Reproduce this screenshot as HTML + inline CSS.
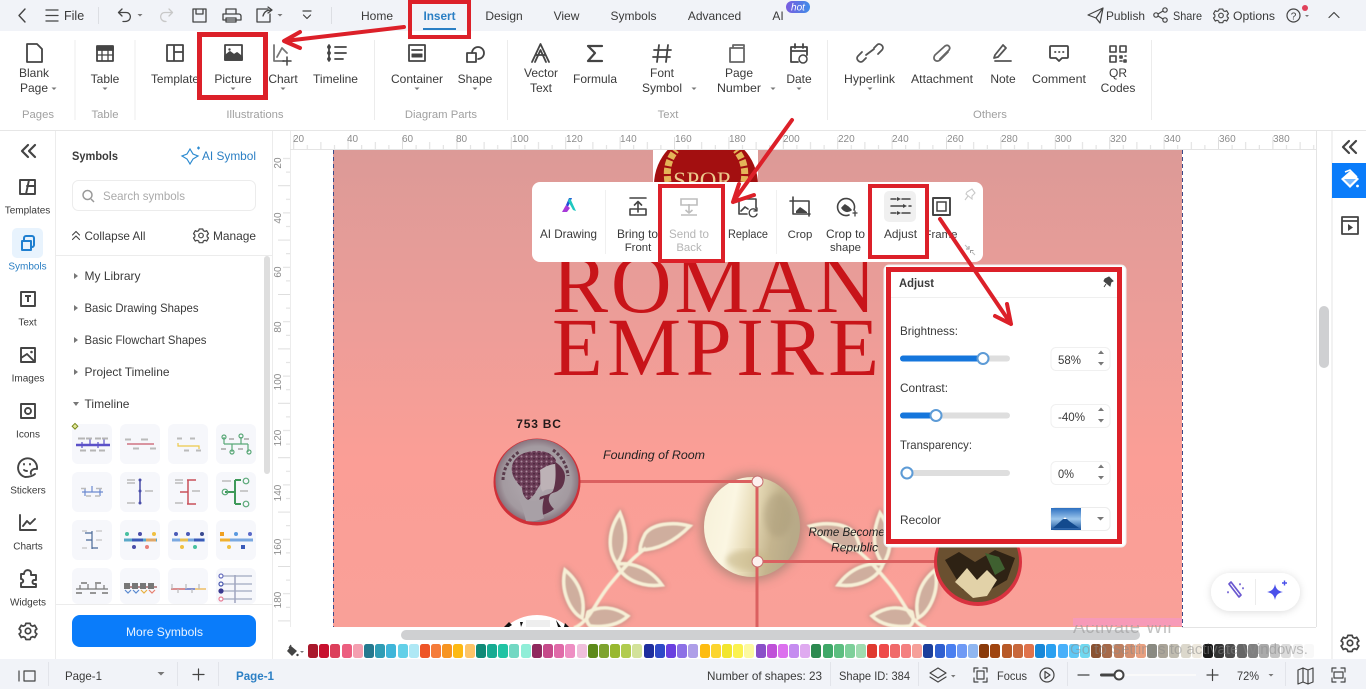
<!DOCTYPE html>
<html><head><meta charset="utf-8"><title>Roman Empire</title>
<style>
html,body{margin:0;padding:0;background:#fff;width:1366px;height:689px;overflow:hidden}
svg{position:absolute;left:0;top:0;display:block}
text{font-family:"Liberation Sans",sans-serif;font-size:12px;fill:#3a3a3a;letter-spacing:0}
.m{text-anchor:middle}
.g{fill:#a0a0a0;font-size:11.3px}
.r{font-size:10px;fill:#8c8c8c}
.l{font-size:10px;fill:#3a3a3a;text-anchor:middle}
.s{font-size:11.4px}
.k{fill:none;stroke:#444;stroke-linejoin:round;stroke-linecap:round}
.k2{fill:none;stroke:#444;stroke-linejoin:round;stroke-linecap:round}
.tr{fill:#777}
.red{fill:none;stroke:#dc2029}
.ar{fill:none;stroke:#dc2029;stroke-width:4;stroke-linecap:round;stroke-linejoin:round}
.pal{position:absolute;left:308px;top:644px;display:flex}
.pal i{display:block;width:10px;height:14px;margin-right:1.2px;border-radius:2.5px}
</style></head><body>
<svg width="1366" height="689" viewBox="0 0 1366 689" xmlns="http://www.w3.org/2000/svg" stroke-width="1.6">
<defs>
<linearGradient id="pg" x1="0" y1="0" x2="0" y2="1"><stop offset="0" stop-color="#dc9a97"/><stop offset=".35" stop-color="#ec9d98"/><stop offset=".65" stop-color="#fb9e96"/><stop offset="1" stop-color="#f9a098"/></linearGradient>
<linearGradient id="moon" x1="0" y1="0" x2="1" y2=".2"><stop offset="0" stop-color="#f6f0d8"/><stop offset=".35" stop-color="#fbf6e2"/><stop offset=".55" stop-color="#e8dcb8"/><stop offset=".8" stop-color="#c4b48e"/><stop offset="1" stop-color="#b8aa88"/></linearGradient>
<radialGradient id="coin" cx=".5" cy=".5" r=".55"><stop offset="0" stop-color="#b4acb2"/><stop offset=".75" stop-color="#a39aa0"/><stop offset="1" stop-color="#7a5f6c"/></radialGradient>
<linearGradient id="hot" x1="0" y1="0" x2="1" y2="0"><stop offset="0" stop-color="#7a5ce0"/><stop offset="1" stop-color="#3f8ce8"/></linearGradient>
<linearGradient id="sky" x1="0" y1="0" x2="0" y2="1"><stop offset="0" stop-color="#2c6fc0"/><stop offset=".5" stop-color="#9cc6ec"/><stop offset="1" stop-color="#1a559e"/></linearGradient>
<pattern id="curl" width="5" height="5" patternUnits="userSpaceOnUse"><rect width="5" height="5" fill="#6a3c56"/><circle cx="1.500" cy="1.500" r="1" fill="#a88a9a"/><circle cx="4" cy="3.800" r=".8" fill="#3f2034"/></pattern>
<clipPath id="pc"><rect x="333" y="150" width="849" height="477"/></clipPath>
<clipPath id="wm"><rect x="1060" y="625" width="112" height="10"/></clipPath>
<filter id="bl" x="-20%" y="-20%" width="140%" height="140%"><feGaussianBlur stdDeviation="5"/></filter>
<filter id="b1" x="-10%" y="-10%" width="120%" height="120%"><feGaussianBlur stdDeviation=".6"/></filter>
<filter id="b3" x="-10%" y="-10%" width="120%" height="120%"><feGaussianBlur stdDeviation="3"/></filter>
<filter id="sh" x="-20%" y="-30%" width="140%" height="160%"><feDropShadow dx="0" dy="1" stdDeviation="4" flood-color="#000" flood-opacity=".14"/></filter>
<pattern id="rt" x="21.2" y="131" width="54.4" height="18" patternUnits="userSpaceOnUse"><path d="M.5 6v12M14.100 14v4M27.700 11v7M41.300 14v4" stroke="#dedede" stroke-width="1" fill="none"/></pattern>
<pattern id="rl" x="272" y="22" width="18" height="54.4" patternUnits="userSpaceOnUse"><path d="M6 .5h12M14 14.100h4M11 27.700h7M14 41.300h4" stroke="#dedede" stroke-width="1" fill="none"/></pattern>
<g id="gear"><path d="M-2.500-9h5l.8 2.400 2.300 1 2.300-1.100 2.500 4.300-1.900 1.600v2.600l1.900 1.600-2.500 4.300-2.300-1.100-2.300 1-.8 2.400h-5l-.8-2.400-2.300-1-2.300 1.100-2.500-4.300 1.900-1.600v-2.600l-1.900-1.600 2.500-4.300 2.300 1.100 2.300-1z"/><circle r="3.200"/></g>
<g id="leaf">
<path d="M620 513C627 530 629 548 617 564C607 550 608 530 620 513Z"/>
<path d="M690 526C672 521 652 524 645 534C641 542 640 546 640 550C660 550 676 540 690 526Z"/>
<path d="M662 585C650 568 632 562 617 564C622 578 640 588 662 585Z"/>
<path d="M565 570C580 582 586 600 582 618C570 612 560 590 565 570Z"/>
<path d="M628 616C614 606 600 606 588 612C586 618 586 622 590 626C606 628 620 624 628 616Z"/>
</g>
<g id="stem"><path d="M574 628C590 622 596 600 612 582C622 570 632 558 646 548"/></g>
</defs>

<!-- base -->
<rect width="1366" height="689" fill="#fff"/>
<rect width="1366" height="31" fill="#f1f3f8"/>
<path d="M0 130.500H1366" stroke="#e6e6e6" stroke-width="1"/>

<!-- top bar -->
<path class="k" stroke-width="1.400" d="M25 9l-6 6.500 6 6.500"/>
<path class="k" stroke-width="1.300" d="M46 10h12M46 15.500h12M46 21h12"/>
<text x="64" y="20" style="font-size:12.500px">File</text>
<path d="M98.500 7v17M331.500 7v17" stroke="#dcdee3" stroke-width="1"/>
<path class="k" stroke-width="1.300" d="M122 9l-3.500 3.500 3.500 3.500M119 12.500h7c6 0 6 9-1 9h-2"/>
<path class="tr" d="M137.500 14h5l-2.500 2.500z"/>
<path class="k" style="stroke:#c8c8c8" stroke-width="1.300" d="M169 9l3.500 3.500-3.500 3.500M172 12.500h-7c-6 0-6 9 1 9h-2"/>
<g class="k" stroke-width="1.300"><path d="M193 9h13v13h-13zM196 9v5h7V9"/><path d="M223 14h16c1 0 2 1 2 2v4h-18v-4c0-1 0-2 0-2zM226 14V9h10v5M226 18h10v4h-10z"/></g>
<g class="k" stroke-width="1.300"><path d="M268 9h-11v13h13v-8M263 16c1-4 4-6 8-6M268 7l4 3-4 3"/></g>
<path class="tr" d="M277.500 14h5l-2.500 2.500z"/>
<path class="k" stroke-width="1.200" d="M303 11h8M303.500 15l3.500 3.500 3.500-3.500"/>
<text x="377" y="20" class="m">Home</text>
<text x="439.500" y="20" class="m" style="fill:#2b7fc4;font-weight:700;font-size:11.800px">Insert</text>
<rect x="423" y="28" width="33" height="2" fill="#2b7fc4"/>
<text x="504" y="20" class="m">Design</text>
<text x="566.500" y="20" class="m">View</text>
<text x="633.500" y="20" class="m">Symbols</text>
<text x="714.500" y="20" class="m">Advanced</text>
<text x="778" y="20" class="m">AI</text>
<rect x="786" y="1" width="24" height="12" rx="6" fill="url(#hot)"/>
<text x="798" y="10.500" class="m" style="font-size:10px;fill:#fff;font-style:italic">hot</text>
<path class="k" stroke-width="1.200" d="M1088 15l15-7-3 15-4-5zM1096 18l7-10"/>
<text x="1106" y="20" textLength="39" lengthAdjust="spacingAndGlyphs">Publish</text>
<g class="k" stroke-width="1.200"><circle cx="1156" cy="15" r="2.200"/><circle cx="1165" cy="10" r="2.200"/><circle cx="1165" cy="20" r="2.200"/><path d="M1158 14l5-3M1158 16l5 3"/></g>
<text x="1173" y="20" textLength="29" lengthAdjust="spacingAndGlyphs">Share</text>
<g class="k" stroke-width="1.600"><use href="#gear" transform="translate(1221 15.500) scale(.72)"/></g>
<text x="1233" y="20" textLength="42" lengthAdjust="spacingAndGlyphs">Options</text>
<circle cx="1293.500" cy="15.500" r="6.500" class="k" stroke-width="1.200"/>
<text x="1293.500" y="19.500" class="m" style="font-size:10px">?</text>
<circle cx="1305" cy="8" r="3" fill="#e0405a"/>
<path class="tr" d="M1305 15h4l-2 2z"/>
<path class="k" stroke-width="1.200" d="M1329 17.500l5-5 5 5"/>

<!-- ribbon separators -->
<path d="M75 40v80M135 40v80M374.500 40v80M507.500 40v80M827.500 40v80M1151.500 40v80" stroke="#ececec" stroke-width="1"/>
<!-- ribbon icons -->
<g class="k2" stroke-width="1.800">
<path d="M27 44h10l5 5v13H27z"/>
<path d="M97 46h16v15H97z"/><path d="M97 47h16v3H97z" fill="#444"/><path d="M97 55h16M102 50v11M108 50v11" stroke-width="1.300"/>
<path d="M167 45h16v16h-16zM174 45v16M174 52h9"/>
<path d="M225 45h17v15h-17z"/><path d="M225 60v-4l5-4 4 3 3-2 5 4v3z" fill="#444"/><circle cx="229.500" cy="49.500" r="1.200" fill="#444" stroke="none"/>
<path d="M274 45v16h10M277 57l5-9 5 5" stroke="#777"/><path d="M287 57v8M283 61h8" stroke-width="1.500"/>
<path d="M329 45v16M335 47h11M335 53h11M335 59h8"/><circle cx="329" cy="47" r="1"/><circle cx="329" cy="53" r="1"/><circle cx="329" cy="59" r="1"/>
<path d="M409 45h16v16h-16zM412 50h10"/><path d="M412 54h10v3h-10z" fill="#444" stroke-width="1"/>
<path d="M467 53h9v9h-9z"/><path d="M472 53a6 6 0 1 1 6 6"/>
<path d="M532 62l8.500-18 8.500 18M536 55h9M535 62l5.500-12 5.500 12"/>
<path d="M602 46h-14l7 7-7 8h14" stroke-width="2.200"/>
<path d="M659 45l-2 17M668 45l-2 17M654 50h17M653 57h17"/>
<path d="M733 48v-3h11v2M730 48h14v14h-14z" stroke="#666"/>
<path d="M791 47h16v8M791 47v15h7M791 51h16M795 44v4M803 44v4"/><circle cx="803" cy="59" r="4" stroke-width="1.500"/>
<path d="M866 58l-3 3c-3 3-8-2-5-5l4-4M874 48l3-3c3-3 8 2 5 5l-4 4M866 55l8-6" stroke="#555"/>
<path d="M948 52l-8 8c-4 3-8-1-5-5l10-9c3-2 6 1 4 4l-9 9" stroke="#666"/>
<path d="M995 55l8-10 3 3-8 9-4 1zM995 61h16" stroke="#555"/>
<path d="M1051 46h16c1 0 1 1 1 1v10c0 1-1 1-1 1h-5l-3 3-3-3h-5s-1 0-1-1V47s0-1 1-1z"/><path d="M1055 52h.5M1059 52h.5M1063 52h.5"/>
<path d="M1110 46h6v6h-6zM1120 46h6v6h-6zM1110 56h6v6h-6z" stroke-width="1.600"/><path d="M1120 56h2v2h-2zM1124 60h2v2h-2zM1120 61h2M1125 56h1" stroke-width="1.600"/>
</g>
<!-- ribbon labels -->
<text x="34" y="77" class="m">Blank</text><text x="34" y="92" class="m">Page</text><path class="tr" d="M51.500 87.500h5l-2.500 2.500z"/>
<text x="105" y="83" class="m">Table</text><path class="tr" d="M102.500 87.500h5l-2.500 2.500z"/>
<text x="151" y="83" textLength="48" lengthAdjust="spacingAndGlyphs">Template</text>
<text x="233" y="83" class="m">Picture</text><path class="tr" d="M230.500 87.500h5l-2.500 2.500z"/>
<text x="283" y="83" class="m">Chart</text><path class="tr" d="M280.500 87.500h5l-2.500 2.500z"/>
<text x="313" y="83" textLength="45" lengthAdjust="spacingAndGlyphs">Timeline</text>
<text x="391" y="83" textLength="52" lengthAdjust="spacingAndGlyphs">Container</text><path class="tr" d="M414.500 87.500h5l-2.500 2.500z"/>
<text x="475" y="83" class="m">Shape</text><path class="tr" d="M472.500 87.500h5l-2.500 2.500z"/>
<text x="541" y="77" class="m">Vector</text><text x="541" y="92" class="m">Text</text>
<text x="573" y="83" textLength="44" lengthAdjust="spacingAndGlyphs">Formula</text>
<text x="662" y="77" class="m">Font</text><text x="642" y="92" textLength="40" lengthAdjust="spacingAndGlyphs">Symbol</text><path class="tr" d="M691.500 87.500h5l-2.500 2.500z"/>
<text x="739" y="77" class="m">Page</text><text x="717" y="92" textLength="44" lengthAdjust="spacingAndGlyphs">Number</text><path class="tr" d="M770.500 87.500h5l-2.500 2.500z"/>
<text x="799" y="83" class="m">Date</text><path class="tr" d="M796.500 87.500h5l-2.500 2.500z"/>
<text x="844" y="83" textLength="51" lengthAdjust="spacingAndGlyphs">Hyperlink</text><path class="tr" d="M867.500 87.500h5l-2.500 2.500z"/>
<text x="911" y="83" textLength="62" lengthAdjust="spacingAndGlyphs">Attachment</text>
<text x="1003" y="83" class="m">Note</text>
<text x="1032" y="83" textLength="54" lengthAdjust="spacingAndGlyphs">Comment</text>
<text x="1118" y="77" class="m">QR</text><text x="1118" y="92" class="m">Codes</text>
<text x="38" y="118" class="m g">Pages</text><text x="105" y="118" class="m g">Table</text><text x="255" y="118" class="m g">Illustrations</text><text x="441" y="118" class="m g">Diagram Parts</text><text x="668" y="118" class="m g">Text</text><text x="990" y="118" class="m g">Others</text>

<!-- left rail -->
<path d="M55.500 131V659M272.500 131V659M290.500 131V627" stroke="#ececec" stroke-width="1"/>
<path class="k2" stroke-width="2.200" d="M28 145l-6 6 6 6M35 145l-6 6 6 6"/>
<g class="k2" stroke-width="1.900">
<path d="M20 180h15v14H20zM26 194l3-14M27 186h8"/>
<path d="M21 292h14v14H21z"/>
<path d="M21 348h14v14H21zM21 358l6-4 8 8"/>
<path d="M21 404h14v14H21z"/><circle cx="28" cy="411" r="3"/>
<path d="M35 474c-3 3-8 3-10 3a9.500 9.500 0 1 1 12-8c-4-1-7 2-6 5M24 464v.5M30 464v.5M24 470c1 1 2 1 3 1"/>
<path d="M20 515v15h16M23 526l4-5 3 3 5-5"/>
<path d="M24 574c0-5 7-5 7-1v2h5v5h-2c-2 0-2 4 0 4h2v3H21v-4c3 0 3-4 0-4v-5z"/>
</g>
<rect x="12" y="228" width="31" height="30" rx="5" fill="#e8f3fd"/>
<path d="M22 241h9v9h-9z M24 241v-3c0-1 1-2 2-2h6c1 0 2 1 2 2v7c0 1-1 2-2 2h-1" fill="none" stroke="#1f7fd0" stroke-width="2" stroke-linejoin="round"/>
<path d="M25 296h6M28 296v6" stroke="#444" stroke-width="2"/><circle cx="31.500" cy="352" r="1.300" fill="#444"/>
<text x="27.500" y="213.500" class="l">Templates</text>
<text x="27.500" y="269.500" class="l" style="fill:#2b7fc4">Symbols</text>
<text x="27.500" y="325.500" class="l">Text</text>
<text x="28" y="381.500" class="l">Images</text>
<text x="28" y="437.500" class="l">Icons</text>
<text x="28" y="493.500" class="l">Stickers</text>
<text x="28" y="549.500" class="l">Charts</text>
<text x="28" y="605.500" class="l">Widgets</text>
<g class="k2" stroke-width="2"><use href="#gear" transform="translate(28 631) scale(.85)"/></g>

<!-- symbols panel -->
<text x="72" y="160" textLength="46" lengthAdjust="spacingAndGlyphs" style="font-weight:700">Symbols</text>
<path d="M190 149l3 5 5 2-5 3-3 5-3-5-5-3 5-2z M197 148h3M198.500 146.500v3" fill="none" stroke="#2b8ad0" stroke-width="1.200"/>
<text x="202" y="160" textLength="54" lengthAdjust="spacingAndGlyphs" style="fill:#2b7fc4">AI Symbol</text>
<rect x="72.500" y="180.500" width="183" height="30" rx="6" fill="#fff" stroke="#ececec" stroke-width="1"/>
<circle cx="87.500" cy="195" r="4.500" fill="none" stroke="#999" stroke-width="1.500"/><path d="M91 199l3 3" stroke="#999" stroke-width="1.500"/>
<text x="103" y="200" textLength="82" lengthAdjust="spacingAndGlyphs" style="fill:#aaa">Search symbols</text>
<path class="k" stroke-width="1.100" d="M72.500 235l3.500-3.500 3.500 3.500M72.500 239.500l3.500-3.500 3.500 3.500"/>
<text x="84.500" y="240" textLength="61" lengthAdjust="spacingAndGlyphs">Collapse All</text>
<g class="k" stroke-width="1.700"><use href="#gear" transform="translate(201 235.500) scale(.72)"/></g>
<text x="213" y="240" textLength="43" lengthAdjust="spacingAndGlyphs">Manage</text>
<path d="M56 255.500H272M56 604.500H272" stroke="#ececec" stroke-width="1"/>
<rect x="264" y="256" width="6" height="218" rx="3" fill="#dedede"/>
<path class="tr" d="M74 273l4 3-4 3zM74 305l4 3-4 3zM74 337l4 3-4 3zM74 369l4 3-4 3z"/>
<path class="tr" d="M73 402h6l-3 4z"/>
<text x="84.500" y="280" textLength="56" lengthAdjust="spacingAndGlyphs">My Library</text>
<text x="84.500" y="312" textLength="114" lengthAdjust="spacingAndGlyphs">Basic Drawing Shapes</text>
<text x="84.500" y="344" textLength="122" lengthAdjust="spacingAndGlyphs">Basic Flowchart Shapes</text>
<text x="84.500" y="376" textLength="85" lengthAdjust="spacingAndGlyphs">Project Timeline</text>
<text x="84.500" y="408" textLength="45" lengthAdjust="spacingAndGlyphs">Timeline</text>
<g fill="#f6f7fb">
<rect x="72" y="424" width="40" height="40" rx="6"/><rect x="120" y="424" width="40" height="40" rx="6"/><rect x="168" y="424" width="40" height="40" rx="6"/><rect x="216" y="424" width="40" height="40" rx="6"/>
<rect x="72" y="472" width="40" height="40" rx="6"/><rect x="120" y="472" width="40" height="40" rx="6"/><rect x="168" y="472" width="40" height="40" rx="6"/><rect x="216" y="472" width="40" height="40" rx="6"/>
<rect x="72" y="520" width="40" height="40" rx="6"/><rect x="120" y="520" width="40" height="40" rx="6"/><rect x="168" y="520" width="40" height="40" rx="6"/><rect x="216" y="520" width="40" height="40" rx="6"/>
<rect x="72" y="568" width="40" height="36" rx="6"/><rect x="120" y="568" width="40" height="36" rx="6"/><rect x="168" y="568" width="40" height="36" rx="6"/><rect x="216" y="568" width="40" height="36" rx="6"/>
</g>
<rect x="72.500" y="424.500" width="4" height="4" transform="rotate(45 75 427)" fill="#e4e89a" stroke="#7a8a20" stroke-width="1"/>
<!-- thumbs -->
<g fill="none" stroke-width="1.200">
<path d="M76 445h34" stroke="#5a50c8" stroke-width="2.500"/><path d="M82 442v6M90 438v7M98 442v6M104 438v7" stroke="#5a50c8"/><path d="M78 438.500h7M86 438.500h6M95 438.500h6M102 438.500h6M80 450.500h6M90 450.500h6M99 450.500h6" stroke="#b5b5b5" stroke-width="2"/>
<path d="M127 444h27" stroke="#c85a6a"/><path d="M125 439.500h6M141 439.500h7M133 448.500h6M150 448.500h6" stroke="#bbb" stroke-width="2"/>
<path d="M178 443v3h21v3" stroke="#ecc94a"/><path d="M177 438.500h5M190 438.500h5M184 450.500h5M196 450.500h5" stroke="#bbb" stroke-width="2"/>
<path d="M224 444h24M224 437v7M241 437v7M232 444v8M248 444v8" stroke="#5aa878"/><path d="M229 439h5M244 439h5M221 449h5M238 449h5" stroke="#bbb" stroke-width="2"/><g stroke="#5aa878"><circle cx="224" cy="437" r="2"/><circle cx="241" cy="436" r="2"/><circle cx="232" cy="452" r="2"/><circle cx="249" cy="452" r="2"/></g>
<path d="M82 492h21M85 488v8M92 486v6M100 488v8" stroke="#6c8ad0"/><path d="M81 488.500h5M96 488.500h6M86 496h5M95 496h5" stroke="#bbb" stroke-width="1.600"/>
<path d="M140 480v22" stroke="#4a4ea8" stroke-width="1.500"/><circle cx="140" cy="480" r="1.500" fill="#4a4ea8"/><circle cx="140" cy="491" r="1.500" fill="#4a4ea8"/><circle cx="140" cy="503" r="1.500" fill="#4a4ea8"/><path d="M127 480h8M127 483h8M145 491h8M127 503h8" stroke="#bbb" stroke-width="1.600"/>
<path d="M187 480h9M188 480v24M180 492h8M187 504h9" stroke="#c8505a" stroke-width="1.500"/><path d="M175 480h8M175 483h8M192 491h8M175 503h8" stroke="#bbb" stroke-width="1.600"/>
<path d="M235 480v24M235 480h6M225 492h10M235 504h6" stroke="#3f9a5a" stroke-width="2"/><g stroke="#5aa878"><circle cx="246" cy="481" r="2.800"/><circle cx="225" cy="492" r="2.800"/><circle cx="246" cy="504" r="2.800"/></g><path d="M222 481h9M240 491h8" stroke="#bbb" stroke-width="1.600"/>
<path d="M92 531v18M85 533h7M86 540h6M92 548h6" stroke="#4a6a98"/><path d="M82 531h5M96 531h6M96 540h6M82 548h5" stroke="#ccc" stroke-width="1.600"/>
<path d="M124 540h33" stroke="#5aa8c8" stroke-width="3"/><path d="M132 540h11" stroke="#3a5ab8" stroke-width="3"/><path d="M146 540h10" stroke="#e0a868" stroke-width="3"/><g fill="#4a4ea8" stroke="none"><circle cx="140" cy="534" r="2"/><circle cx="134" cy="547" r="2"/></g><circle cx="127" cy="534" r="2" fill="#48c0a0" stroke="none"/><circle cx="154" cy="534" r="2" fill="#f0c040" stroke="none"/><circle cx="147" cy="547" r="2" fill="#e88078" stroke="none"/>
<path d="M172 540h33" stroke="#7aa8e0" stroke-width="3"/><path d="M180 540h8" stroke="#e8c050" stroke-width="3"/><path d="M194 540h10" stroke="#3a5ab8" stroke-width="3"/><g stroke="none"><circle cx="176" cy="534" r="2" fill="#4a5ab8"/><circle cx="188" cy="534" r="2" fill="#4a5ab8"/><circle cx="202" cy="534" r="2" fill="#3a4a90"/><circle cx="182" cy="547" r="2" fill="#f0c040"/><circle cx="195" cy="547" r="2" fill="#48c0a0"/></g>
<path d="M220 540h33" stroke="#7aa8e0" stroke-width="3"/><path d="M220 540h10" stroke="#f0b030" stroke-width="3"/><g stroke="none"><rect x="220" y="532" width="4" height="4" fill="#f0a020"/><circle cx="236" cy="534" r="2" fill="#5a9ae0"/><circle cx="250" cy="534" r="2" fill="#5a6ac8"/><circle cx="229" cy="547" r="2" fill="#f0c040"/><rect x="241" y="545" width="4" height="4" fill="#3a5ab8"/></g>
<path d="M76 589h32M80 585v4M88 584v5M96 584v5M104 585v4" stroke="#777"/><path d="M81 583h6M95 583h6M76 593h6M90 593h6M102 593h6" stroke="#888" stroke-width="1.800"/>
<path d="M124 587h33" stroke="#a86a6a" stroke-width="1.500"/><rect x="124" y="583" width="6" height="6" fill="#777" stroke="none"/><rect x="132" y="583" width="6" height="6" fill="#777" stroke="none"/><rect x="140" y="583" width="6" height="6" fill="#777" stroke="none"/><rect x="148" y="583" width="6" height="6" fill="#777" stroke="none"/><path d="M125 590l3 3 3-3M133 590l3 3 3-3" stroke="#5a8ad0"/><path d="M141 590l3 3 3-3" stroke="#e8b040"/><path d="M149 590l3 3 3-3" stroke="#e88070"/>
<path d="M171 589h14" stroke="#c84a4a"/><path d="M185 589h10" stroke="#3a4ab0"/><path d="M195 589h11" stroke="#ecb040"/><path d="M172 584v5M186 584v5M199 584v5M178 589v4M192 589v4" stroke="#bbb"/>
<path d="M235 575v28" stroke="#8a90b0"/><path d="M222 576h30M222 584h30M222 591h30M222 599h30" stroke="#a0a8c0"/><g fill="#fff"><circle cx="221" cy="576" r="2" stroke="#6a70c0"/><circle cx="221" cy="584" r="2" stroke="#4a5ab0"/><circle cx="221" cy="591" r="2" stroke="#3a3a90" fill="#3a3a90"/><circle cx="221" cy="599" r="2" stroke="#e88098"/></g>
</g>
<rect x="72" y="615" width="184" height="32" rx="8" fill="#0a7cfa"/>
<text x="126" y="636" textLength="77" lengthAdjust="spacingAndGlyphs" style="fill:#eaf4ff">More Symbols</text>

<!-- rulers -->
<rect x="290" y="131" width="1026" height="18" fill="url(#rt)"/>
<rect x="272" y="150" width="18" height="477" fill="url(#rl)"/>
<path d="M290 149.500H1316" stroke="#e4e4e4" stroke-width="1"/>
<path d="M1316.500 131V627M1332 131V659" stroke="#e4e4e4" stroke-width="1"/>
<g>
<text x="293" y="142" class="r">20</text><text x="347" y="142" class="r">40</text><text x="402" y="142" class="r">60</text><text x="456" y="142" class="r">80</text><text x="512" y="142" class="r">100</text><text x="566" y="142" class="r">120</text><text x="620" y="142" class="r">140</text><text x="675" y="142" class="r">160</text><text x="729" y="142" class="r">180</text><text x="783" y="142" class="r">200</text><text x="838" y="142" class="r">220</text><text x="892" y="142" class="r">240</text><text x="947" y="142" class="r">260</text><text x="1001" y="142" class="r">280</text><text x="1055" y="142" class="r">300</text><text x="1110" y="142" class="r">320</text><text x="1164" y="142" class="r">340</text><text x="1219" y="142" class="r">360</text><text x="1273" y="142" class="r">380</text>
</g>
<g>
<text transform="translate(281 163) rotate(-90)" class="r m">20</text><text transform="translate(281 218) rotate(-90)" class="r m">40</text><text transform="translate(281 272) rotate(-90)" class="r m">60</text><text transform="translate(281 327) rotate(-90)" class="r m">80</text><text transform="translate(281 382) rotate(-90)" class="r m">100</text><text transform="translate(281 438) rotate(-90)" class="r m">120</text><text transform="translate(281 493) rotate(-90)" class="r m">140</text><text transform="translate(281 547) rotate(-90)" class="r m">160</text><text transform="translate(281 600) rotate(-90)" class="r m">180</text>
</g>

<!-- canvas page -->
<rect x="333" y="150" width="849" height="477" fill="url(#pg)"/>
<g clip-path="url(#pc)">
<rect x="653" y="150" width="105" height="40" fill="#fff"/>
<circle cx="706" cy="185" r="52" fill="#a30f10"/>
<path d="M668 182c-2-12 0-22 8-32M744 182c2-12 0-22-8-32" fill="none" stroke="#e4b458" stroke-width="7" stroke-dasharray="6 2"/>
<text x="703" y="188" class="m" style="font-family:'Liberation Serif',serif;font-size:23px;fill:#ecc98c;letter-spacing:.5px">SPQR</text>

<text x="552" y="312" textLength="324" lengthAdjust="spacing" style="font-family:'Liberation Serif',serif;font-size:84px;fill:#c81419">ROMAN</text>
<text x="552" y="375" textLength="327" lengthAdjust="spacing" style="font-family:'Liberation Serif',serif;font-size:83px;fill:#c81419">EMPIRE</text>

<!-- moon -->
<ellipse cx="752" cy="527" rx="52" ry="54" fill="#8f7a6a" opacity=".6" filter="url(#bl)"/>
<ellipse cx="752" cy="527" rx="48" ry="50" fill="url(#moon)"/>
<ellipse cx="778" cy="515" rx="14" ry="22" fill="#a89a78" opacity=".45" filter="url(#b3)"/>
<ellipse cx="748" cy="560" rx="22" ry="10" fill="#c8b88a" opacity=".6" filter="url(#b3)"/>
<!-- leaves -->
<g opacity=".5" filter="url(#b3)" fill="none" stroke="#8a7268" stroke-width="5">
<use href="#leaf"/><g transform="translate(1500 0) scale(-1 1)"><use href="#leaf"/></g>
</g>
<g filter="url(#b1)">
<use href="#leaf" fill="#cfae9e" stroke="#f6efd6" stroke-width="3.500"/>
<use href="#stem" fill="none" stroke="#f6efd6" stroke-width="3.500"/>
<g transform="translate(1500 0) scale(-1 1)"><use href="#leaf" fill="#cfae9e" stroke="#f6efd6" stroke-width="3.500"/><use href="#stem" fill="none" stroke="#f6efd6" stroke-width="3.500"/></g>
</g>
<!-- connector lines -->
<path d="M580 481.500H757V627M757 561.500H937" fill="none" stroke="#db6060" stroke-width="3"/>
<circle cx="757.500" cy="481.500" r="5.500" fill="#fdf0ee" stroke="#c87070" stroke-width="1"/>
<circle cx="757.500" cy="561.500" r="5.500" fill="#fdf0ee" stroke="#c87070" stroke-width="1"/>
<!-- coin -->
<circle cx="537" cy="482" r="43.500" fill="#cf3038"/>
<circle cx="537" cy="480.500" r="41.500" fill="url(#coin)"/>
<path d="M512 472c-2-12 8-20 22-21 10-1 18 2 22 9 0 6-6 8-12 10-2 6-2 14-6 18-3 6-6 10-10 12-4-2-6-8-6-12-4-4-9-10-10-16z" fill="url(#curl)"/>
<path d="M540 470c5-3 10-6 16-6 3 4 6 10 5 16-1 5-4 8-8 9-5 0-8 0-10 3-4-4-2-14-3-22z" fill="#bdb2b6"/>
<path d="M555 462c4 2 10 8 10 14s-2 12-6 14c-3 3-7 2-9 5-3 5 0 10 4 14-4 3-8 5-12 6-2-6-4-12-2-18 4-2 10-2 13-6 3-8 3-18 2-29z" fill="#5f3148"/>
<path d="M518 498c8 4 18 4 26 0-2 8-2 14 0 20-6 3-12 4-18 3-2-8-4-16-8-23z" fill="#a8a0a6"/>
<path d="M503 480a34 34 0 0 1 16-28M553 450a35 35 0 0 1 15 26" fill="none" stroke="#5a3c4c" stroke-width="3" stroke-dasharray="3 2"/>
<!-- second circle -->
<circle cx="978" cy="562" r="44" fill="#d93240"/>
<circle cx="978" cy="561" r="41" fill="#6a5030"/>
<path d="M945 560l14-8 16 10 20-12 20 8-8 22-24 14-20-4z" fill="#2e2214"/>
<path d="M955 582l12-14 10 12 10-10 10 10-10 16-14 2z" fill="#e2d2a8"/>
<path d="M985 553l14 4 6 12-10 6z" fill="#3f6030"/>
<!-- third circle -->
<circle cx="537" cy="661" r="46" fill="#fff"/>
<path d="M504 627l5-5 3 3-3 2zM520 622h3l-2 5zM556 620l5 7h-3zM565 623l4 4h-5z" fill="#111"/>
<path d="M526 620h24v7h-24z" fill="#eee"/>
<text x="539" y="428" class="m" style="font-weight:700;font-size:12px;letter-spacing:.8px;fill:#241a1a">753 BC</text>
<text x="603" y="459" textLength="102" lengthAdjust="spacingAndGlyphs" style="font-style:italic;fill:#222">Founding of Room</text>
<text x="808.500" y="536" textLength="82" lengthAdjust="spacingAndGlyphs" style="font-style:italic;fill:#222">Rome Becomes</text>
<text x="831" y="551.500" textLength="47" lengthAdjust="spacingAndGlyphs" style="font-style:italic;fill:#222">Republic</text>
<rect x="1073" y="618" width="109" height="8" fill="#f79ab8"/>
</g>
<path d="M333.500 150V627M1182.500 150V627" stroke="#3a4a8a" stroke-width="1" stroke-dasharray="4 3" fill="none"/>
<path d="M1182 627.500H1316" stroke="#e4e4e4" stroke-width="1"/>

<!-- horizontal + vertical scrollbars -->
<rect x="401" y="630" width="739" height="10" rx="5" fill="#cfd0d2"/>
<rect x="1319" y="306" width="10" height="62" rx="5" fill="#cfd0d2"/>

<!-- float ai pill -->
<rect x="1211" y="573" width="89" height="38" rx="19" fill="#fff" filter="url(#sh)"/>
<path d="M1255.500 579v26" stroke="#ececec" stroke-width="1"/>
<path d="M1229 584l10 13 2-2-10-13zM1240 584v.5M1228 592v.5M1243 588v.5" fill="none" stroke="#6a58d0" stroke-width="1.700" stroke-linecap="round" stroke-linejoin="round"/>
<path d="M1275 584c1 5 3 7 8 8-5 1-7 3-8 8-1-5-3-7-8-8 5-1 7-3 8-8z" fill="#4a50ea"/>
<path d="M1282 583h5M1284.500 580.500v5" stroke="#4a50ea" stroke-width="1.400"/>

<!-- right rail -->
<path class="k2" stroke-width="2.200" d="M1349 141l-6 6 6 6M1356 141l-6 6 6 6"/>
<rect x="1332" y="163" width="34" height="35" fill="#0a7cfa"/>
<path d="M1350 171l9 8-9 9-9-9z" fill="#fff"/><path d="M1345 172l5-2 7 7" fill="none" stroke="#fff" stroke-width="1.500"/><path d="M1344 179h12l-6 6z" fill="#0a7cfa" opacity=".55"/><circle cx="1357.500" cy="186" r="1.400" fill="#fff"/>
<path class="k2" stroke-width="1.800" d="M1342 217h16v17h-16zM1342 221h16"/><path d="M1348 224l5 3.500-5 3.500z" fill="#444"/>
<g class="k2" stroke-width="2"><use href="#gear" transform="translate(1350 643) scale(.85)"/></g>

<!-- paint bucket -->
<path d="M291 646l6 5-5 5-5-5z" fill="#444"/><path d="M289 648l2-3" stroke="#444" stroke-width="1.200"/><circle cx="297.500" cy="655" r="1.200" fill="#444"/>
<path class="tr" d="M300 651h4l-2 2z"/>

<!-- status bar -->
<rect y="659" width="1366" height="30" fill="#f1f3f8"/>
<path d="M48.500 662v24M177.500 662v24M218.500 662v24M830.500 662v24M918.500 662v24M1067.500 662v24M1285.500 662v24" stroke="#e2e4ea" stroke-width="1"/>
<path class="k" stroke-width="1.200" d="M19 671v10M24 671h11v10H24z"/>
<text x="65" y="680" textLength="37" lengthAdjust="spacingAndGlyphs">Page-1</text>
<path class="tr" d="M157.500 672h7l-3.500 3.500z"/>
<path class="k" stroke-width="1.200" d="M198.500 669v11M193 674.500h11"/>
<text x="236" y="680" textLength="38" lengthAdjust="spacingAndGlyphs" style="fill:#2b7fc4;font-weight:700">Page-1</text>
<text x="707" y="680" textLength="115" lengthAdjust="spacingAndGlyphs">Number of shapes: 23</text>
<text x="839" y="680" textLength="71" lengthAdjust="spacingAndGlyphs">Shape ID: 384</text>
<path class="k" stroke-width="1.200" d="M938 668l8 5-8 5-8-5zM930 677l8 5 8-5"/>
<path class="tr" d="M951 675h4.500l-2.250 2.500z"/>
<path class="k" stroke-width="1.200" d="M974 672v-4h4M983 668h4v4M987 678v4h-4M978 682h-4v-4M977 671h7v8h-7z"/>
<text x="997" y="680" textLength="30" lengthAdjust="spacingAndGlyphs">Focus</text>
<circle cx="1047" cy="675" r="7" class="k" stroke-width="1.200"/><path class="k" stroke-width="1.200" d="M1045 671.500l5 3.500-5 3.500z"/>
<path class="k" stroke-width="1.200" d="M1078 675h11M1207 675h11M1212.500 669.500v11"/>
<rect x="1100" y="674" width="96" height="2" fill="#fafafa"/>
<rect x="1100" y="673.500" width="18" height="3" fill="#444" rx="1.500"/>
<circle cx="1119" cy="675" r="4.500" fill="#fff" stroke="#444" stroke-width="2"/>
<text x="1237" y="680" textLength="22" lengthAdjust="spacingAndGlyphs">72%</text>
<path class="tr" d="M1268.500 674h5l-2.500 2.500z"/>
<path class="k" stroke-width="1.200" d="M1298 670l5-2 5 2 5-2v14l-5 2-5-2-5 2zM1303 668v14M1308 670v14"/>
<path class="k" stroke-width="1.200" d="M1332 672v-4h4M1341 668h4v4M1345 678v4h-4M1336 682h-4v-4M1334 672h9v6h-9z"/>

<!-- floating toolbar -->
<rect x="532" y="182" width="451" height="80" rx="8" fill="#fff"/>
<path d="M605.500 190v64M776.500 190v64" stroke="#f0f0f0" stroke-width="1"/>
<path d="M566 205l3-7 3 0-4 9z" fill="#1f4fd8"/><path d="M570 198l6 13-3-1-5-9z" fill="#1fc8c0"/><path d="M562 212l4-7 4 3-3 4z" fill="#a83ad8"/>
<text x="540" y="238" textLength="57" lengthAdjust="spacingAndGlyphs">AI Drawing</text>
<g class="k2" stroke-width="1.600"><path d="M630 198h16M638 212v-10M634.500 205l3.500-3.500 3.500 3.500M630 209h16v6h-16z"/></g>
<text x="617" y="238" textLength="41" lengthAdjust="spacingAndGlyphs">Bring to</text><text x="638" y="251" class="m s">Front</text>
<g fill="none" stroke="#bdbdbd" stroke-width="1.600"><path d="M681 199h16v6h-16zM689 204v9M685.500 210l3.500 3 3.500-3M681 215h16"/></g>
<text x="669" y="238" textLength="40" lengthAdjust="spacingAndGlyphs" style="fill:#b5b5b5">Send to</text><text x="689" y="251" class="m s" style="fill:#b5b5b5">Back</text>
<g class="k2" stroke-width="1.600"><path d="M739 199h17v9M739 199v15h8"/><path d="M741 211l4-4 3 2"/><path d="M757 214a4 4 0 1 1-1-4M757 208v3h-3" stroke-width="1.300"/></g>
<text x="728" y="238" textLength="40" lengthAdjust="spacingAndGlyphs">Replace</text>
<g class="k2" stroke-width="1.600"><path d="M793 197v17h17M790 201h19v15"/></g><path d="M796 211l4-4 3 2 4 3v1h-11z" fill="#444"/>
<text x="800" y="238" class="m s">Crop</text>
<g class="k2" stroke-width="1.600"><path d="M854 210a8.500 8.500 0 1 0-5 5"/><path d="M842 208l3-3 3 2 3 3c-3 2-6 2-9-2z" fill="#444"/><path d="M853 213h4M855 211v5" stroke-width="1.300"/></g>
<text x="826" y="238" textLength="39" lengthAdjust="spacingAndGlyphs">Crop to</text><text x="845.500" y="251" class="m s">shape</text>
<rect x="884" y="191" width="32" height="31" rx="5" fill="#f0f0f0"/>
<g class="k2" stroke-width="1.500"><path d="M891 199h5M902 199h8M891 206h12M909 206h2M891 213h5M902 213h8"/></g><path d="M897 197l4 2-4 2zM903 204l4 2-4 2zM897 211l4 2-4 2z" fill="#444"/>
<text x="884" y="238" textLength="33" lengthAdjust="spacingAndGlyphs">Adjust</text>
<path class="k2" stroke-width="1.900" d="M933 198h17v17h-17z"/><path d="M937 202h9v9h-9z" fill="none" stroke="#444" stroke-width="1.500"/>
<text x="941" y="238" class="m s">Frame</text>
<path d="M967 192l5-3 3 4-3 3 0 3-6-5zM968 196l-3 4" fill="none" stroke="#c8c8c8" stroke-width="1.100"/>
<path d="M969 246v3h-3M970.500 253v-2.500h3" fill="none" stroke="#999" stroke-width="1"/><path d="M965 245l3 3M975 255l-3-3" stroke="#bbb" stroke-width="1"/>

<!-- adjust panel -->
<rect x="884" y="265" width="242" height="282" rx="5" fill="#fff" stroke="#eee" stroke-width="1"/>
<text x="899" y="287" textLength="35" lengthAdjust="spacingAndGlyphs" style="font-weight:700">Adjust</text>
<path d="M1105 279l4-2 4 4-2 1-1 4-6-5zM1106 284l-2 3" fill="#444" stroke="#444" stroke-width="1"/>
<path d="M890 297.500H1118" stroke="#efefef" stroke-width="1"/>
<text x="900" y="335" textLength="58" lengthAdjust="spacingAndGlyphs">Brightness:</text>
<rect x="900" y="355.500" width="110" height="6" rx="3" fill="#dedede"/><rect x="900" y="355.500" width="83" height="6" rx="3" fill="#1576dc"/><circle cx="983" cy="358.500" r="5.500" fill="#fff" stroke="#5d9bd6" stroke-width="2"/>
<rect x="1051" y="347.500" width="59" height="23" rx="5" fill="#fff" stroke="#f0f0f0" stroke-width="1"/><text x="1058" y="364" textLength="23" lengthAdjust="spacingAndGlyphs">58%</text>
<text x="900" y="392" textLength="48" lengthAdjust="spacingAndGlyphs">Contrast:</text>
<rect x="900" y="412.500" width="110" height="6" rx="3" fill="#dedede"/><rect x="900" y="412.500" width="36" height="6" rx="3" fill="#1576dc"/><circle cx="936" cy="415.500" r="5.500" fill="#fff" stroke="#5d9bd6" stroke-width="2"/>
<rect x="1051" y="404.500" width="59" height="23" rx="5" fill="#fff" stroke="#f0f0f0" stroke-width="1"/><text x="1058" y="421" textLength="27" lengthAdjust="spacingAndGlyphs">-40%</text>
<text x="900" y="449" textLength="72" lengthAdjust="spacingAndGlyphs">Transparency:</text>
<rect x="900" y="470" width="110" height="6" rx="3" fill="#dedede"/><circle cx="907" cy="473" r="5.500" fill="#fff" stroke="#5d9bd6" stroke-width="2"/>
<rect x="1051" y="461.500" width="59" height="23" rx="5" fill="#fff" stroke="#f0f0f0" stroke-width="1"/><text x="1058" y="478" textLength="16" lengthAdjust="spacingAndGlyphs">0%</text>
<path class="tr" d="M1098 354h6l-3-3.500zM1098 362h6l-3 3.500zM1098 411h6l-3-3.500zM1098 419h6l-3 3.500zM1098 468h6l-3-3.500zM1098 476h6l-3 3.500z"/>
<text x="900" y="524" textLength="41" lengthAdjust="spacingAndGlyphs">Recolor</text>
<rect x="1051" y="507.500" width="59" height="23" rx="5" fill="#fff" stroke="#ececec" stroke-width="1"/>
<rect x="1051" y="508" width="30" height="22" fill="url(#sky)"/>
<path d="M1053 528l9-8 3-3 4 4 10 7z" fill="#134a8e"/><path d="M1063 519l2-2 2 2z" fill="#fff"/>
<path class="tr" d="M1097 517h7l-3.500 3.500z"/>

<!-- red annotations -->
<rect x="410" y="2" width="59" height="35" class="red" stroke-width="4"/>
<rect x="199.500" y="34.500" width="66" height="63" class="red" stroke-width="5"/>
<rect x="660" y="186" width="63" height="75" class="red" stroke-width="4"/>
<rect x="870" y="186" width="57" height="71" class="red" stroke-width="4"/>
<rect x="888.500" y="269.500" width="231" height="272" class="red" stroke-width="5"/>
<path class="ar" d="M404 27L285 41M300 32L284 41L300 48"/>
<path class="ar" d="M792 120L733 202M739 184L733 202L754 195"/>
<path class="ar" d="M940 219L1011 324M1007 304L1011 324L995 316"/>
</svg>

<div class="pal">
<i style="background:#a9182b"></i><i style="background:#c8102e"></i><i style="background:#dc3f5b"></i><i style="background:#ec5f80"></i><i style="background:#f49fb0"></i>
<i style="background:#25798f"></i><i style="background:#2f9db5"></i><i style="background:#3fb5d9"></i><i style="background:#62d0e8"></i><i style="background:#aee8f5"></i>
<i style="background:#ee5527"></i><i style="background:#f57c3a"></i><i style="background:#f79421"></i><i style="background:#fdb913"></i><i style="background:#fdc468"></i>
<i style="background:#0f8a77"></i><i style="background:#17ab92"></i><i style="background:#20c4a4"></i><i style="background:#72d8c3"></i><i style="background:#90eed8"></i>
<i style="background:#8f2a5e"></i><i style="background:#c64a8a"></i><i style="background:#e06aa8"></i><i style="background:#ee8ec3"></i><i style="background:#f0bfdc"></i>
<i style="background:#5d8a1a"></i><i style="background:#7ea32e"></i><i style="background:#98b82f"></i><i style="background:#b1cc4f"></i><i style="background:#d3e29a"></i>
<i style="background:#1f2f9e"></i><i style="background:#2f49c8"></i><i style="background:#6a3fe0"></i><i style="background:#8c70e6"></i><i style="background:#ae9ee8"></i>
<i style="background:#fdbc11"></i><i style="background:#fcd52f"></i><i style="background:#f2e52e"></i><i style="background:#fbf24f"></i><i style="background:#fcf9a0"></i>
<i style="background:#8a4fc8"></i><i style="background:#bf50d8"></i><i style="background:#dc70ee"></i><i style="background:#c58cf0"></i><i style="background:#dfaaf0"></i>
<i style="background:#2c8a50"></i><i style="background:#3fa868"></i><i style="background:#5cbe80"></i><i style="background:#7ed09a"></i><i style="background:#a0dcb0"></i>
<i style="background:#e03a2f"></i><i style="background:#ee4a4a"></i><i style="background:#f06a6a"></i><i style="background:#f48080"></i><i style="background:#f6a09a"></i>
<i style="background:#1c3f9c"></i><i style="background:#2f5fd0"></i><i style="background:#4a7ff0"></i><i style="background:#6f9af5"></i><i style="background:#90b6f0"></i>
<i style="background:#8a3a0a"></i><i style="background:#a04510"></i><i style="background:#b85a28"></i><i style="background:#c8683c"></i><i style="background:#e0734c"></i>
<i style="background:#1888d8"></i><i style="background:#2aa0f0"></i><i style="background:#48b0fa"></i><i style="background:#60c8f5"></i><i style="background:#70d8f0"></i>
<i style="background:#8a5232"></i><i style="background:#a66a4a"></i><i style="background:#c08060"></i><i style="background:#d49070"></i><i style="background:#e8a080"></i>
<i style="background:#8a8a80"></i><i style="background:#aaa498"></i><i style="background:#c0bcb0"></i><i style="background:#dcd8cc"></i><i style="background:#eee9de"></i>
<i style="background:#1a1a1a"></i><i style="background:#333"></i><i style="background:#4d4d4d"></i><i style="background:#666"></i><i style="background:#808080"></i><i style="background:#aaa"></i><i style="background:#c4c4c4"></i><i style="background:#dcdcdc"></i><i style="background:#eee"></i><i style="background:#f8f8f8"></i>
</div>

<svg width="1366" height="689" viewBox="0 0 1366 689" xmlns="http://www.w3.org/2000/svg" style="pointer-events:none">
<defs><clipPath id="wm2"><rect x="1060" y="625" width="112" height="10"/></clipPath></defs>
<text x="1073" y="633" clip-path="url(#wm2)" style="font-size:18px;fill:#9a9a9a;opacity:.6;letter-spacing:.4px">Activate Windows</text>
<text x="1070" y="654" textLength="238" lengthAdjust="spacingAndGlyphs" style="font-size:15px;fill:#8a8a8a;opacity:.5">Go to Settings to activate Windows.</text>
</svg>
</body></html>
